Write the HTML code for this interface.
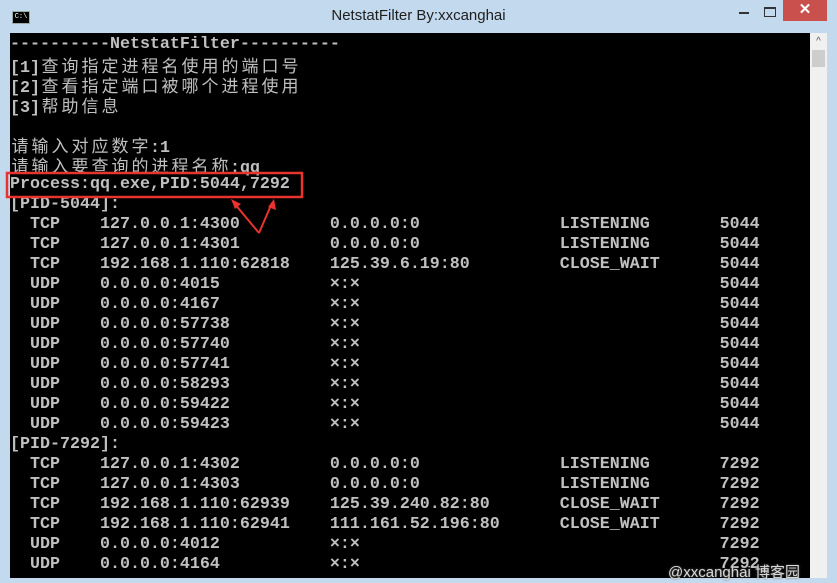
<!DOCTYPE html>
<html><head><meta charset="utf-8"><style>
html,body{margin:0;padding:0}
body{width:837px;height:583px;background:#c3d9ee;position:relative;overflow:hidden;font-family:"Liberation Sans",sans-serif}
.title{position:absolute;left:0;top:0;width:837px;height:33px;text-align:center;line-height:31px;font-size:15px;color:#1e1e1e}
.close{position:absolute;left:783px;top:0;width:44px;height:21px;background:#c9504d;color:#fff;text-align:center;line-height:20px;font-size:15px;font-weight:bold}
.ico{position:absolute;left:12px;top:11px;width:16px;height:11px;background:#000;border:1px solid #9aa;color:#fff;font-size:7px;line-height:11px;text-align:center;font-family:"Liberation Mono",monospace}
.con{position:absolute;left:10px;top:33px;width:800px;height:545px;background:#000}
.sb{position:absolute;left:810px;top:33px;width:17px;height:545px;background:#f0f0f0}
.sb .th{position:absolute;left:2px;top:17px;width:13px;height:17px;background:#cdcdcd}
.sb .up{position:absolute;left:0;top:0;width:17px;height:17px;text-align:center;font-size:10px;color:#555;line-height:17px}
pre{margin:0;position:absolute;left:10px;top:35px;font-family:"Liberation Mono","Noto Sans CJK SC",monospace;font-size:16.67px;font-weight:bold;line-height:20px;color:#c0c0c0;white-space:pre}
.l{display:block;height:20px;position:relative}
.cj{display:inline-block;width:20px;text-align:center;font-family:"Noto Sans CJK SC",sans-serif;font-size:17px;font-weight:normal}
.wm{position:absolute;left:668px;top:561px;font-size:15px;color:#d8d8d8;text-shadow:0 0 2px #666}
</style></head><body>
<div class="title">NetstatFilter By:xxcanghai</div>
<div class="ico">C:\</div>
<div style="position:absolute;left:739px;top:12px;width:10px;height:2px;background:#333"></div>
<div style="position:absolute;left:764px;top:7px;width:10px;height:7px;border:1px solid #333;border-top-width:2px"></div>
<div class="close">✕</div>
<div class="con"></div>
<div class="sb"><div class="up">^</div><div class="th"></div></div>
<pre><span class="l">----------NetstatFilter----------</span><span class="l">[1]<span class="cj">查</span><span class="cj">询</span><span class="cj">指</span><span class="cj">定</span><span class="cj">进</span><span class="cj">程</span><span class="cj">名</span><span class="cj">使</span><span class="cj">用</span><span class="cj">的</span><span class="cj">端</span><span class="cj">口</span><span class="cj">号</span></span><span class="l">[2]<span class="cj">查</span><span class="cj">看</span><span class="cj">指</span><span class="cj">定</span><span class="cj">端</span><span class="cj">口</span><span class="cj">被</span><span class="cj">哪</span><span class="cj">个</span><span class="cj">进</span><span class="cj">程</span><span class="cj">使</span><span class="cj">用</span></span><span class="l">[3]<span class="cj">帮</span><span class="cj">助</span><span class="cj">信</span><span class="cj">息</span></span><span class="l"> </span><span class="l"><span class="cj">请</span><span class="cj">输</span><span class="cj">入</span><span class="cj">对</span><span class="cj">应</span><span class="cj">数</span><span class="cj">字</span>:1</span><span class="l"><span class="cj">请</span><span class="cj">输</span><span class="cj">入</span><span class="cj">要</span><span class="cj">查</span><span class="cj">询</span><span class="cj">的</span><span class="cj">进</span><span class="cj">程</span><span class="cj">名</span><span class="cj">称</span>:qq</span><span class="l">Process:qq.exe,PID:5044,7292</span><span class="l">[PID-5044]:</span><span class="l">  TCP    127.0.0.1:4300         0.0.0.0:0              LISTENING       5044</span><span class="l">  TCP    127.0.0.1:4301         0.0.0.0:0              LISTENING       5044</span><span class="l">  TCP    192.168.1.110:62818    125.39.6.19:80         CLOSE_WAIT      5044</span><span class="l">  UDP    0.0.0.0:4015           ×:×                                    5044</span><span class="l">  UDP    0.0.0.0:4167           ×:×                                    5044</span><span class="l">  UDP    0.0.0.0:57738          ×:×                                    5044</span><span class="l">  UDP    0.0.0.0:57740          ×:×                                    5044</span><span class="l">  UDP    0.0.0.0:57741          ×:×                                    5044</span><span class="l">  UDP    0.0.0.0:58293          ×:×                                    5044</span><span class="l">  UDP    0.0.0.0:59422          ×:×                                    5044</span><span class="l">  UDP    0.0.0.0:59423          ×:×                                    5044</span><span class="l">[PID-7292]:</span><span class="l">  TCP    127.0.0.1:4302         0.0.0.0:0              LISTENING       7292</span><span class="l">  TCP    127.0.0.1:4303         0.0.0.0:0              LISTENING       7292</span><span class="l">  TCP    192.168.1.110:62939    125.39.240.82:80       CLOSE_WAIT      7292</span><span class="l">  TCP    192.168.1.110:62941    111.161.52.196:80      CLOSE_WAIT      7292</span><span class="l">  UDP    0.0.0.0:4012           ×:×                                    7292</span><span class="l">  UDP    0.0.0.0:4164           ×:×                                    7292</span></pre>
<div style="position:absolute;left:0;top:578px;width:837px;height:5px;background:#c3d9ee"></div>
<svg style="position:absolute;left:0;top:0" width="837" height="583">
<rect x="7" y="173" width="295" height="24" fill="none" stroke="#e8332e" stroke-width="2.5"/>
<g stroke="#e8332e" stroke-width="2" fill="#e8332e">
<line x1="259" y1="233" x2="234" y2="203"/><line x1="259" y1="233" x2="272" y2="203"/>
</g>
<polygon points="231,199 241,204 235,209" fill="#e8332e"/>
<polygon points="274,199 276,210 268,207" fill="#e8332e"/>
</svg>
<div class="wm">@xxcanghai 博客园</div>
</body></html>
